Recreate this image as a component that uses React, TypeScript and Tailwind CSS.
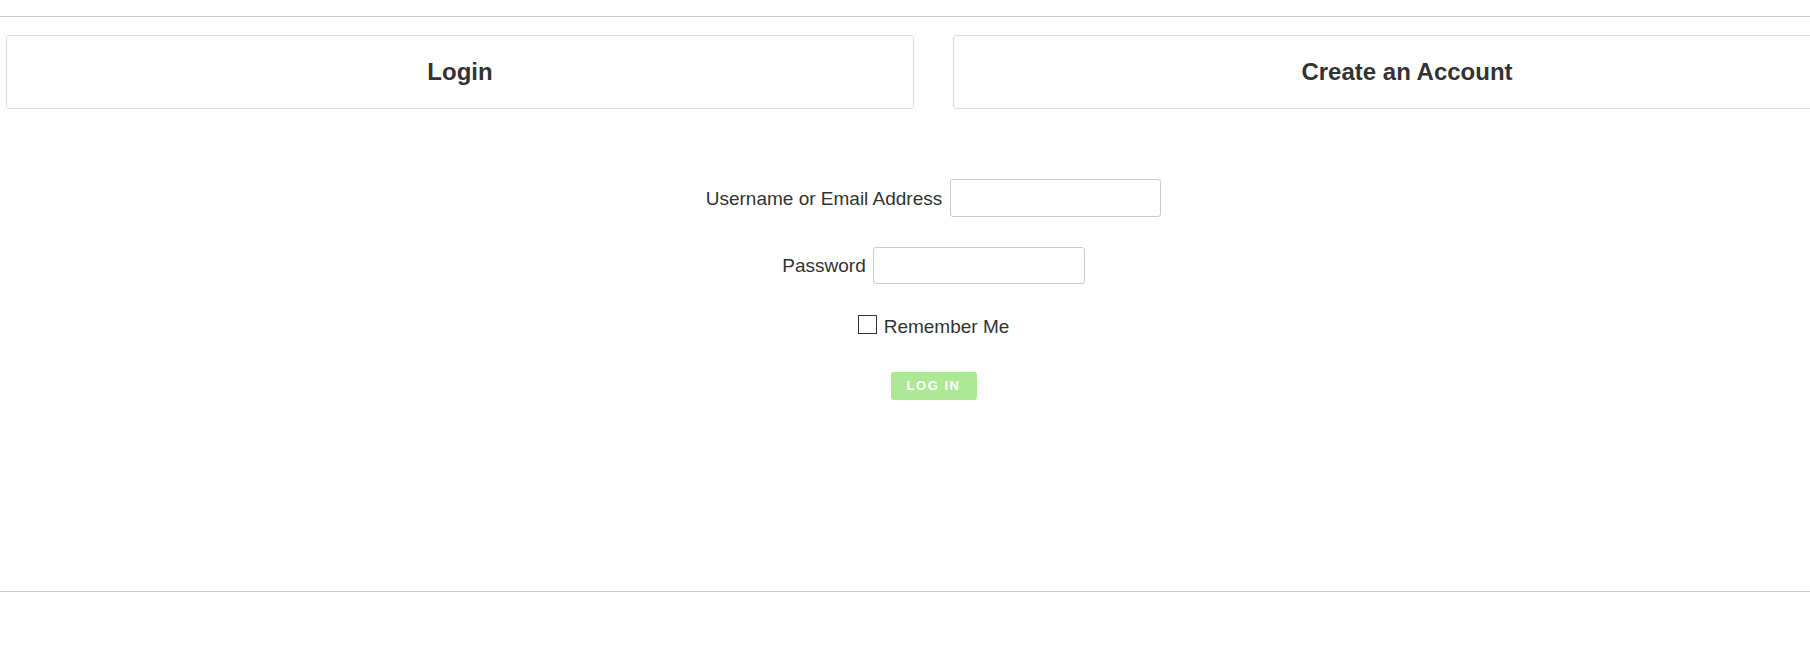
import { useState } from 'react'

export default function App() {
  const [remember, setRemember] = useState(false)

  return (
    <div className="w-[1810px] h-[653px] overflow-hidden bg-white text-[#333] font-['Liberation_Sans',Arial,sans-serif]">
      <div className="w-[1867px]">
        <div className="h-[16px]" />
        <div className="border-t border-[#cccccc]" />

        {/* tabs */}
        <div className="flex gap-[39px] px-[6px] pt-[18px]">
          <div className="w-[908px] h-[74px] flex items-center justify-center border border-[#dddddd] rounded-[3px]">
            <span className="text-[24px] font-bold text-[#333]">Login</span>
          </div>
          <div className="w-[908px] h-[74px] flex items-center justify-center border border-[#dddddd] rounded-[3px]">
            <span className="text-[24px] font-bold text-[#333]">Create an Account</span>
          </div>
        </div>

        {/* form */}
        <div className="flex flex-col items-center mt-[70px] text-[19px]">
          <div className="flex items-center h-[38px]">
            <label className="leading-none">Username or Email Address</label>
            <input type="text" className="ml-[8px] w-[211px] h-[38px] border border-[#cccccc] rounded-[3px] outline-none px-2" />
          </div>
          <div className="flex items-center h-[37px] mt-[30px]">
            <label className="leading-none">Password</label>
            <input type="password" className="ml-[7px] w-[212px] h-[37px] border border-[#cccccc] rounded-[3px] outline-none px-2" />
          </div>
          <div className="flex items-center h-[24px] mt-[28px]">
            <button
              onClick={() => setRemember(!remember)}
              className="w-[19px] h-[19px] border border-[#333] bg-white flex items-center justify-center"
            >
              {remember && <span className="text-[14px] leading-none">✓</span>}
            </button>
            <span className="ml-[7px] leading-none mt-[5px]">Remember Me</span>
          </div>
          <button className="mt-[36px] w-[86px] h-[28px] rounded-[3px] bg-[#ace895] text-white text-[13px] font-bold tracking-[1.5px] flex items-center justify-center">
            LOG IN
          </button>
        </div>

        <div className="mt-[191px] border-t border-[#cccccc]" />
      </div>
    </div>
  )
}
